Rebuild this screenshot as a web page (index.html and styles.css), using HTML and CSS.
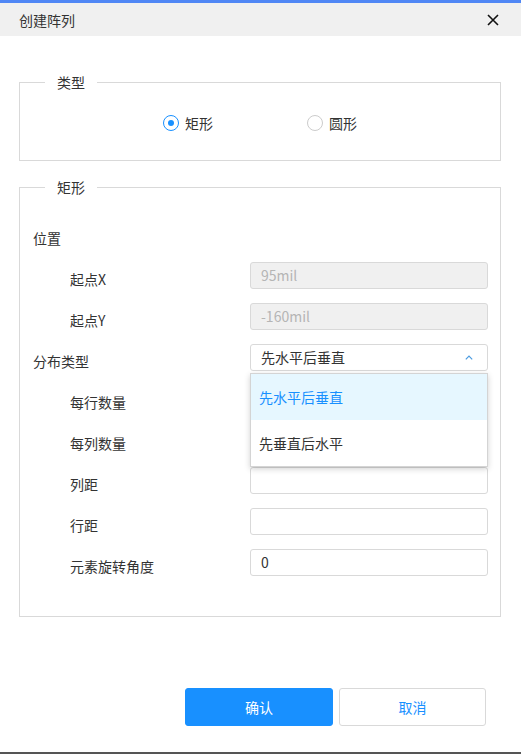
FILE: index.html
```html
<!DOCTYPE html>
<html lang="zh-CN">
  <head>
    <meta charset="UTF-8" />
    <meta name="viewport" content="width=device-width, initial-scale=1.0" />
    <title>创建阵列</title>
    <link rel="stylesheet" href="styles.css">
  </head>
  <body>
    <div class="dialog">
      <div class="dialog-header">
        <span class="dialog-title">创建阵列</span>
        <svg class="close-icon" width="12" height="12" viewBox="0 0 12 12">
          <path d="M1 1 L11 11 M11 1 L1 11" stroke="#111" stroke-width="1.6" fill="none" />
        </svg>
      </div>

      <div class="dialog-body">
        <fieldset class="group">
          <legend>类型</legend>
          <div class="radio-row">
            <label class="radio checked"><span class="radio-dot"></span>矩形</label>
            <label class="radio"><span class="radio-dot"></span>圆形</label>
          </div>
        </fieldset>

        <fieldset class="group">
          <legend>矩形</legend>
          <div class="form">
            <div class="form-title">位置</div>

            <div class="form-row">
              <span class="form-label sub">起点X</span>
              <div class="input disabled">95mil</div>
            </div>
            <div class="form-row">
              <span class="form-label sub">起点Y</span>
              <div class="input disabled">-160mil</div>
            </div>
            <div class="form-row">
              <span class="form-label">分布类型</span>
              <div class="select-wrap">
                <div class="input select">
                  <span>先水平后垂直</span>
                  <svg width="8" height="5" viewBox="0 0 8 5">
                    <polyline points="0.8,4.4 4,1.2 7.2,4.4" stroke="#4a9be0" stroke-width="1.2" fill="none" />
                  </svg>
                </div>
                <ul class="dropdown">
                  <li class="active">先水平后垂直</li>
                  <li>先垂直后水平</li>
                </ul>
              </div>
            </div>
            <div class="form-row">
              <span class="form-label sub">每行数量</span>
              <div class="input"></div>
            </div>
            <div class="form-row">
              <span class="form-label sub">每列数量</span>
              <div class="input"></div>
            </div>
            <div class="form-row">
              <span class="form-label sub">列距</span>
              <div class="input"></div>
            </div>
            <div class="form-row">
              <span class="form-label sub">行距</span>
              <div class="input"></div>
            </div>
            <div class="form-row">
              <span class="form-label sub">元素旋转角度</span>
              <div class="input">0</div>
            </div>
          </div>
        </fieldset>
      </div>

      <div class="dialog-footer">
        <button class="btn btn-primary">确认</button>
        <button class="btn">取消</button>
      </div>
    </div>
  </body>
</html>
```

FILE: styles.css
```css
* {
  box-sizing: border-box;
}
body {
  margin: 0;
  padding: 0;
  font-family: "Noto Sans CJK SC", "Noto Sans", sans-serif;
  font-size: 14px;
  color: #333;
  background-color: #fff;
}
.dialog {
  display: flex;
  flex-direction: column;
  height: 754px;
  border-top: 3px solid #5087f5;
  border-bottom: 2px solid #555;
}
.dialog-header {
  display: flex;
  align-items: center;
  justify-content: space-between;
  height: 33px;
  padding: 0 22px 0 19px;
  background-color: #f0f0f0;
}
.dialog-title {
  line-height: 20px;
}
.dialog-body {
  padding: 36px 20px 0 19px;
}
.group {
  margin: 0;
  padding: 0;
  border: 1px solid #d9d9d9;
}
.group + .group {
  margin-top: 16px;
}
.group legend {
  margin-left: 25px;
  padding: 0 12px 0 12px;
  line-height: 20px;
}
.radio-row {
  display: flex;
  justify-content: center;
  gap: 94px;
  padding: 21px 0 27px;
}
.radio {
  display: flex;
  align-items: center;
  gap: 6px;
  line-height: 20px;
}
.radio-dot {
  display: flex;
  align-items: center;
  justify-content: center;
  width: 16px;
  height: 16px;
  border: 1px solid #ccc;
  border-radius: 50%;
}
.radio.checked .radio-dot {
  border-color: #1890ff;
}
.radio.checked .radio-dot::after {
  content: "";
  width: 6px;
  height: 6px;
  border-radius: 50%;
  background-color: #1890ff;
}
.form {
  display: flex;
  flex-direction: column;
  gap: 14px;
  padding: 31px 12px 40px 13px;
}
.form-title {
  line-height: 20px;
}
.form-row {
  display: flex;
  align-items: flex-start;
}
.form-label {
  flex: 0 0 217px;
  padding-top: 7px;
  line-height: 20px;
}
.form-label.sub {
  padding-left: 37px;
}
.input {
  flex: 1;
  height: 27px;
  padding: 0 10px;
  border: 1px solid #d9d9d9;
  border-radius: 3px;
  line-height: 25px;
  color: #333;
  background-color: #fff;
}
.input.disabled {
  color: #b5b5b5;
  background-color: #f0f0f0;
}
.select-wrap {
  position: relative;
  flex: 1;
}
.select {
  display: flex;
  align-items: center;
  justify-content: space-between;
  padding-right: 14px;
}
.dropdown {
  position: absolute;
  top: 29px;
  left: 0;
  right: 0;
  z-index: 2;
  margin: 0;
  padding: 0;
  list-style: none;
  background-color: #fff;
  border: 1px solid #d4d4d4;
  box-shadow: 0 2px 6px rgba(0, 0, 0, 0.18);
}
.dropdown li {
  height: 46px;
  padding-left: 8px;
  line-height: 46px;
  color: #333;
}
.dropdown li.active {
  color: #1890ff;
  background-color: #e6f7ff;
}
.dialog-footer {
  display: flex;
  justify-content: flex-end;
  gap: 6px;
  padding: 71px 35px 0 0;
}
.btn {
  width: 147px;
  height: 38px;
  border: 1px solid #d9d9d9;
  border-radius: 3px;
  font-family: inherit;
  font-size: 14px;
  color: #1890ff;
  background-color: #fff;
  cursor: pointer;
}
.btn-primary {
  width: 148px;
  border-color: #1890ff;
  color: #fff;
  background-color: #1890ff;
}
```
